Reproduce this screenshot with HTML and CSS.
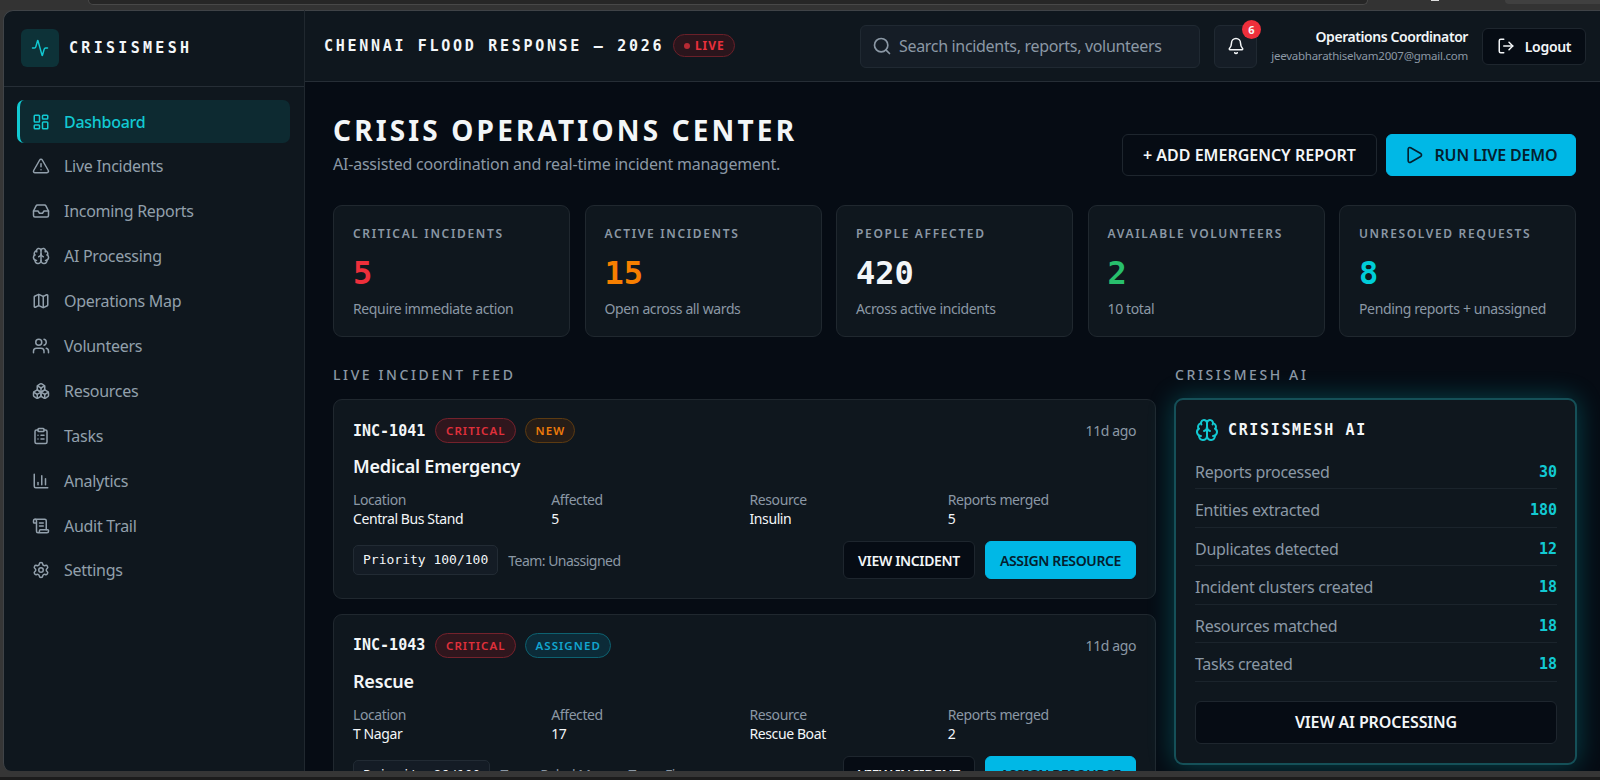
FILE: index.html
```html
<!DOCTYPE html>
<html lang="en">
    <head>
        <meta charset="UTF-8" />
        <title>CrisisMesh - Operations Center</title>
        <link rel="stylesheet" href="styles.css">
    </head>

    <body>
        <!-- browser frame strip above the app -->
        <div class="chrome">
            <div class="address"></div>
            <div class="chrome-mark"></div>
            <div class="chrome-btn"></div>
        </div>

        <div class="app">
            <aside class="sidebar">
                <div class="brand">
                    <div class="logo">
                        <svg class="icon" viewBox="0 0 24 24"><path d="M22 12h-2.48a2 2 0 0 0-1.93 1.46l-2.35 8.36a.25.25 0 0 1-.48 0L9.24 2.18a.25.25 0 0 0-.48 0l-2.35 8.36A2 2 0 0 1 4.49 12H2"/></svg>
                    </div>
                    <span class="brand-name">CRISISMESH</span>
                </div>
                <nav class="nav">
                    <a class="nav-item active">
                        <svg class="icon" viewBox="0 0 24 24"><rect width="7" height="9" x="3" y="3" rx="1"/><rect width="7" height="5" x="14" y="3" rx="1"/><rect width="7" height="9" x="14" y="12" rx="1"/><rect width="7" height="5" x="3" y="16" rx="1"/></svg>
                        <span>Dashboard</span>
                    </a>
                    <a class="nav-item">
                        <svg class="icon" viewBox="0 0 24 24"><path d="m21.73 18-8-14a2 2 0 0 0-3.48 0l-8 14A2 2 0 0 0 4 21h16a2 2 0 0 0 1.73-3"/><path d="M12 9v4"/><path d="M12 17h.01"/></svg>
                        <span>Live Incidents</span>
                    </a>
                    <a class="nav-item">
                        <svg class="icon" viewBox="0 0 24 24"><path d="M22 12h-6l-2 3h-4l-2-3H2"/><path d="M5.45 5.11 2 12v6a2 2 0 0 0 2 2h16a2 2 0 0 0 2-2v-6l-3.45-6.89A2 2 0 0 0 16.76 4H7.24a2 2 0 0 0-1.79 1.11z"/></svg>
                        <span>Incoming Reports</span>
                    </a>
                    <a class="nav-item">
                        <svg class="icon" viewBox="0 0 24 24"><path d="M12 18V5"/><path d="M15 13a4.17 4.17 0 0 1-3-4 4.17 4.17 0 0 1-3 4"/><path d="M17.598 6.5A3 3 0 1 0 12 5a3 3 0 1 0-5.598 1.5"/><path d="M17.997 5.125a4 4 0 0 1 2.526 5.77"/><path d="M18 18a4 4 0 0 0 2-7.464"/><path d="M19.967 17.483A4 4 0 1 1 12 18a4 4 0 1 1-7.967-.517"/><path d="M6 18a4 4 0 0 1-2-7.464"/><path d="M6.003 5.125a4 4 0 0 0-2.526 5.77"/></svg>
                        <span>AI Processing</span>
                    </a>
                    <a class="nav-item">
                        <svg class="icon" viewBox="0 0 24 24"><path d="M14.106 5.553a2 2 0 0 0 1.788 0l3.659-1.83A1 1 0 0 1 21 4.619v12.764a1 1 0 0 1-.553.894l-4.553 2.277a2 2 0 0 1-1.788 0l-4.212-2.106a2 2 0 0 0-1.788 0l-3.659 1.83A1 1 0 0 1 3 19.381V6.618a1 1 0 0 1 .553-.894l4.553-2.277a2 2 0 0 1 1.788 0z"/><path d="M15 5.764v15"/><path d="M9 3.236v15"/></svg>
                        <span>Operations Map</span>
                    </a>
                    <a class="nav-item">
                        <svg class="icon" viewBox="0 0 24 24"><path d="M16 21v-2a4 4 0 0 0-4-4H6a4 4 0 0 0-4 4v2"/><path d="M16 3.128a4 4 0 0 1 0 7.744"/><path d="M22 21v-2a4 4 0 0 0-3-3.87"/><circle cx="9" cy="7" r="4"/></svg>
                        <span>Volunteers</span>
                    </a>
                    <a class="nav-item">
                        <svg class="icon" viewBox="0 0 24 24"><path d="M2.97 12.92A2 2 0 0 0 2 14.63v3.24a2 2 0 0 0 .97 1.71l3 1.8a2 2 0 0 0 2.06 0L12 19v-5.5l-5-3-4.03 2.42Z"/><path d="m7 16.5-4.74-2.85"/><path d="m7 16.5 5-3"/><path d="M7 16.5v5.17"/><path d="M12 13.5V19l3.97 2.38a2 2 0 0 0 2.06 0l3-1.8a2 2 0 0 0 .97-1.71v-3.24a2 2 0 0 0-.97-1.71L17 10.5l-5 3Z"/><path d="m17 16.5-5-3"/><path d="m17 16.5 4.74-2.85"/><path d="M17 16.5v5.17"/><path d="M7.97 4.42A2 2 0 0 0 7 6.13v4.37l5 3 5-3V6.13a2 2 0 0 0-.97-1.71l-3-1.8a2 2 0 0 0-2.06 0l-3 1.8Z"/><path d="M12 8 7.26 5.15"/><path d="m12 8 4.74-2.85"/><path d="M12 13.5V8"/></svg>
                        <span>Resources</span>
                    </a>
                    <a class="nav-item">
                        <svg class="icon" viewBox="0 0 24 24"><rect width="8" height="4" x="8" y="2" rx="1"/><path d="M16 4h2a2 2 0 0 1 2 2v14a2 2 0 0 1-2 2H6a2 2 0 0 1-2-2V6a2 2 0 0 1 2-2h2"/><path d="M12 11h4"/><path d="M12 16h4"/><path d="M8 11h.01"/><path d="M8 16h.01"/></svg>
                        <span>Tasks</span>
                    </a>
                    <a class="nav-item">
                        <svg class="icon" viewBox="0 0 24 24"><path d="M3 3v16a2 2 0 0 0 2 2h16"/><path d="M18 17V9"/><path d="M13 17V5"/><path d="M8 17v-3"/></svg>
                        <span>Analytics</span>
                    </a>
                    <a class="nav-item">
                        <svg class="icon" viewBox="0 0 24 24"><path d="M15 12h-5"/><path d="M15 8h-5"/><path d="M19 17V5a2 2 0 0 0-2-2H4"/><path d="M8 21h12a2 2 0 0 0 2-2v-1a1 1 0 0 0-1-1H11a1 1 0 0 0-1 1v1a2 2 0 1 1-4 0V5a2 2 0 1 0-4 0v2a1 1 0 0 0 1 1h3"/></svg>
                        <span>Audit Trail</span>
                    </a>
                    <a class="nav-item">
                        <svg class="icon" viewBox="0 0 24 24"><path d="M9.671 4.136a2.34 2.34 0 0 1 4.659 0 2.34 2.34 0 0 0 3.319 1.915 2.34 2.34 0 0 1 2.33 4.033 2.34 2.34 0 0 0 0 3.831 2.34 2.34 0 0 1-2.33 4.033 2.34 2.34 0 0 0-3.319 1.915 2.34 2.34 0 0 1-4.659 0 2.34 2.34 0 0 0-3.32-1.915 2.34 2.34 0 0 1-2.33-4.033 2.34 2.34 0 0 0 0-3.831A2.34 2.34 0 0 1 6.35 6.051a2.34 2.34 0 0 0 3.319-1.915"/><circle cx="12" cy="12" r="3"/></svg>
                        <span>Settings</span>
                    </a>
                </nav>
            </aside>

            <div class="main">
                <header class="topbar">
                    <div class="event">
                        <span class="event-name">CHENNAI FLOOD RESPONSE — 2026</span>
                        <span class="live"><i class="dot"></i>LIVE</span>
                    </div>
                    <div class="search">
                        <svg class="icon" viewBox="0 0 24 24"><circle cx="11" cy="11" r="8"/><path d="m21 21-4.34-4.34"/></svg>
                        <span>Search incidents, reports, volunteers</span>
                    </div>
                    <div class="bell">
                        <svg class="icon" viewBox="0 0 24 24"><path d="M10.268 21a2 2 0 0 0 3.464 0"/><path d="M3.262 15.326A1 1 0 0 0 4 17h16a1 1 0 0 0 .74-1.673C19.41 13.956 18 12.499 18 8A6 6 0 0 0 6 8c0 4.499-1.411 5.956-2.738 7.326"/></svg>
                        <span class="count">6</span>
                    </div>
                    <div class="user">
                        <div class="user-name">Operations Coordinator</div>
                        <div class="user-mail">jeevabharathiselvam2007@gmail.com</div>
                    </div>
                    <div class="btn logout">
                        <svg class="icon" viewBox="0 0 24 24"><path d="m16 17 5-5-5-5"/><path d="M21 12H9"/><path d="M9 21H5a2 2 0 0 1-2-2V5a2 2 0 0 1 2-2h4"/></svg>
                        <span>Logout</span>
                    </div>
                </header>

                <div class="content">
                    <div class="page-head">
                        <div>
                            <h1>CRISIS OPERATIONS CENTER</h1>
                            <p class="lead">AI-assisted coordination and real-time incident management.</p>
                        </div>
                        <div class="actions">
                            <div class="btn add">+ ADD EMERGENCY REPORT</div>
                            <div class="btn primary run">
                                <svg class="icon" viewBox="0 0 24 24"><path d="M5 5a2 2 0 0 1 3.008-1.728l11.997 6.998a2 2 0 0 1 .003 3.458l-12 7A2 2 0 0 1 5 19z"/></svg>
                                <span>RUN LIVE DEMO</span>
                            </div>
                        </div>
                    </div>

                    <div class="stats">
                        <div class="card stat">
                            <div class="stat-label">CRITICAL INCIDENTS</div>
                            <div class="stat-value red">5</div>
                            <div class="stat-sub">Require immediate action</div>
                        </div>
                        <div class="card stat">
                            <div class="stat-label">ACTIVE INCIDENTS</div>
                            <div class="stat-value orange">15</div>
                            <div class="stat-sub">Open across all wards</div>
                        </div>
                        <div class="card stat">
                            <div class="stat-label">PEOPLE AFFECTED</div>
                            <div class="stat-value">420</div>
                            <div class="stat-sub">Across active incidents</div>
                        </div>
                        <div class="card stat">
                            <div class="stat-label">AVAILABLE VOLUNTEERS</div>
                            <div class="stat-value green">2</div>
                            <div class="stat-sub">10 total</div>
                        </div>
                        <div class="card stat">
                            <div class="stat-label">UNRESOLVED REQUESTS</div>
                            <div class="stat-value cyan">8</div>
                            <div class="stat-sub">Pending reports + unassigned</div>
                        </div>
                    </div>

                    <div class="columns">
                        <section class="feed">
                            <h2>LIVE INCIDENT FEED</h2>
                            <article class="card incident">
                                <div class="inc-top">
                                    <span class="inc-id">INC-1041</span>
                                    <span class="tag critical">CRITICAL</span>
                                    <span class="tag new">NEW</span>
                                    <span class="ago">11d ago</span>
                                </div>
                                <h3>Medical Emergency</h3>
                                <div class="facts">
                                    <div><label>Location</label><b>Central Bus Stand</b></div>
                                    <div><label>Affected</label><b>5</b></div>
                                    <div><label>Resource</label><b>Insulin</b></div>
                                    <div><label>Reports merged</label><b>5</b></div>
                                </div>
                                <div class="inc-foot">
                                    <span class="priority">Priority 100/100</span>
                                    <span class="team">Team: Unassigned</span>
                                    <div class="btn view">VIEW INCIDENT</div>
                                    <div class="btn primary assign">ASSIGN RESOURCE</div>
                                </div>
                            </article>
                            <article class="card incident">
                                <div class="inc-top">
                                    <span class="inc-id">INC-1043</span>
                                    <span class="tag critical">CRITICAL</span>
                                    <span class="tag assigned">ASSIGNED</span>
                                    <span class="ago">11d ago</span>
                                </div>
                                <h3>Rescue</h3>
                                <div class="facts">
                                    <div><label>Location</label><b>T Nagar</b></div>
                                    <div><label>Affected</label><b>17</b></div>
                                    <div><label>Resource</label><b>Rescue Boat</b></div>
                                    <div><label>Reports merged</label><b>2</b></div>
                                </div>
                                <div class="inc-foot">
                                    <span class="priority">Priority 96/100</span>
                                    <span class="team">Team: Rahul Menon, Team Five</span>
                                    <div class="btn view">VIEW INCIDENT</div>
                                    <div class="btn primary assign">ASSIGN RESOURCE</div>
                                </div>
                            </article>
                        </section>

                        <section class="ai">
                            <h2>CRISISMESH AI</h2>
                            <div class="card ai-card">
                                <div class="ai-head">
                                    <svg class="icon" viewBox="0 0 24 24"><path d="M12 18V5"/><path d="M15 13a4.17 4.17 0 0 1-3-4 4.17 4.17 0 0 1-3 4"/><path d="M17.598 6.5A3 3 0 1 0 12 5a3 3 0 1 0-5.598 1.5"/><path d="M17.997 5.125a4 4 0 0 1 2.526 5.77"/><path d="M18 18a4 4 0 0 0 2-7.464"/><path d="M19.967 17.483A4 4 0 1 1 12 18a4 4 0 1 1-7.967-.517"/><path d="M6 18a4 4 0 0 1-2-7.464"/><path d="M6.003 5.125a4 4 0 0 0-2.526 5.77"/></svg>
                                    <span>CRISISMESH AI</span>
                                </div>
                                <div class="ai-row"><span>Reports processed</span><b>30</b></div>
                                <div class="ai-row"><span>Entities extracted</span><b>180</b></div>
                                <div class="ai-row"><span>Duplicates detected</span><b>12</b></div>
                                <div class="ai-row"><span>Incident clusters created</span><b>18</b></div>
                                <div class="ai-row"><span>Resources matched</span><b>18</b></div>
                                <div class="ai-row"><span>Tasks created</span><b>18</b></div>
                                <div class="btn ai-btn">VIEW AI PROCESSING</div>
                            </div>
                        </section>
                    </div>
                </div>
            </div>
        </div>
    </body>
</html>
```
FILE: styles.css
```css
* {
    box-sizing: border-box;
}
body {
    margin: 0;
    width: 1600px;
    height: 780px;
    overflow: hidden;
    background: #1c1c1c;
    color: #f3f6f8;
    font-family: "Noto Sans", sans-serif;
    font-size: 16px;
}
h1,
h2,
h3,
p {
    margin: 0;
}
.icon {
    flex: none;
    width: 18px;
    height: 18px;
    fill: none;
    stroke: currentColor;
    stroke-width: 2;
    stroke-linecap: round;
    stroke-linejoin: round;
}

/* browser frame */
.chrome {
    display: flex;
    height: 10px;
    padding-left: 88px;
    background: #333;
    overflow: hidden;
}
.address {
    flex: none;
    width: 1280px;
    height: 5px;
    background: #262626;
    border: 1px solid #484848;
    border-top: 0;
    border-radius: 0 0 14px 14px;
}
.chrome-mark {
    flex: none;
    width: 8px;
    height: 1px;
    margin-left: 63px;
    background: #ddd;
}
.chrome-btn {
    flex: none;
    width: 110px;
    height: 4px;
    margin-left: 66px;
    background: #404040;
    border-radius: 0 0 0 8px;
}

/* app shell */
.app {
    display: flex;
    height: 767px;
    padding-left: 3px;
    background: #363636;
    border-bottom: 6px solid #363636;
    overflow: hidden;
}
.sidebar {
    width: 302px;
    flex: none;
    background: #0f171e;
    border: 1px solid #3f4347;
    border-right-color: #20282f;
    border-bottom: 0;
    border-radius: 10px 0 0 8px;
}
.brand {
    display: flex;
    align-items: center;
    gap: 10px;
    height: 76px;
    padding: 0 17px 1px;
    border-bottom: 1px solid #262e36;
}
.logo {
    display: flex;
    align-items: center;
    justify-content: center;
    width: 38px;
    height: 38px;
    border-radius: 6px;
    background: #0d3238;
    color: #12c9d2;
}
.brand-name {
    font: bold 15px "DejaVu Sans Mono", monospace;
    letter-spacing: 3.3px;
}
.nav {
    display: flex;
    flex-direction: column;
    gap: 1.9px;
    padding: 13px 14px 0 13px;
}
.nav-item {
    display: flex;
    align-items: center;
    gap: 14px;
    height: 43px;
    padding-left: 12px;
    border-left: 3px solid transparent;
    border-radius: 7px;
    color: #92a0ac;
    letter-spacing: -0.28px;
}
.nav-item.active {
    background: #0d2a31;
    border-left-color: #12c9d2;
    color: #12c9d2;
    font-weight: 500;
}

.main {
    flex: 1;
    min-width: 0;
    background: #060c14;
    border-top: 1px solid #3f4347;
    overflow: hidden;
}

/* top bar */
.topbar {
    display: flex;
    align-items: center;
    height: 71px;
    padding: 0 14px 0 19px;
    background: #0f171e;
    border-bottom: 1px solid #262e36;
}
.event {
    display: flex;
    align-items: center;
    flex: 1;
    padding-bottom: 1px;
}
.event-name {
    width: 349px;
    font: bold 15px "DejaVu Sans Mono", monospace;
    letter-spacing: 2.7px;
    white-space: nowrap;
}
.live {
    display: flex;
    align-items: center;
    width: 62px;
    height: 23px;
    padding-left: 10px;
    border: 1px solid #6a2029;
    border-radius: 12px;
    background: #2a151c;
    color: #e8303c;
    font-size: 12px;
    font-weight: 700;
    letter-spacing: 0.9px;
}
.dot {
    width: 6px;
    height: 6px;
    margin-right: 5px;
    border-radius: 50%;
    background: #b72a34;
}
.search {
    display: flex;
    align-items: center;
    gap: 7px;
    width: 340px;
    height: 43px;
    padding-left: 11px;
    border: 1px solid #202932;
    border-radius: 6px;
    background: #151d26;
    color: #8b98a5;
    letter-spacing: -0.32px;
    white-space: nowrap;
}
.search .icon {
    width: 20px;
    height: 20px;
}
.bell {
    position: relative;
    display: flex;
    align-items: center;
    justify-content: center;
    width: 43px;
    height: 43px;
    margin-left: 14px;
    border: 1px solid #202932;
    border-radius: 6px;
    background: #151d26;
}
.count {
    position: absolute;
    top: -6px;
    right: -5px;
    width: 19px;
    height: 19px;
    border-radius: 50%;
    background: #ee2f3b;
    font-size: 11px;
    font-weight: 700;
    line-height: 19px;
    text-align: center;
}
.user {
    width: 211px;
    padding-bottom: 1px;
    text-align: right;
    white-space: nowrap;
}
.user-name {
    font-size: 14px;
    font-weight: 600;
    line-height: 19px;
    letter-spacing: -0.43px;
}
.user-mail {
    color: #8b98a5;
    font-size: 11.5px;
    line-height: 19px;
    letter-spacing: -0.25px;
}
.btn {
    display: flex;
    align-items: center;
    justify-content: center;
    border: 1px solid #1e262e;
    border-radius: 6px;
    background: #060c14;
    font-weight: 600;
    white-space: nowrap;
}
.btn.primary {
    background: #00b8e6;
    border-color: #00b8e6;
    color: #04202e;
}
.logout {
    gap: 10px;
    width: 104px;
    height: 37px;
    margin-left: 14px;
    font-size: 14px;
    letter-spacing: -0.3px;
}

/* page */
.content {
    padding: 28px 24px 0 28px;
}
.page-head {
    display: flex;
    justify-content: space-between;
    height: 95px;
}
h1 {
    margin-top: 1px;
    font-size: 28px;
    font-weight: 700;
    line-height: 38px;
    letter-spacing: 3.15px;
}
.lead {
    margin-top: 2px;
    color: #8b98a5;
    line-height: 26px;
    letter-spacing: -0.22px;
}
.actions {
    display: flex;
    gap: 9px;
    padding-top: 24px;
}
.add {
    width: 255px;
    height: 42px;
    letter-spacing: 0;
}
.run {
    gap: 10px;
    width: 190px;
    height: 42px;
    letter-spacing: -0.15px;
}
.run .icon {
    width: 20px;
    height: 20px;
}
.card {
    background: #0f171e;
    border: 1px solid #20282f;
    border-radius: 9px;
}
.stats {
    display: grid;
    grid-template-columns: repeat(5, 1fr);
    gap: 14.5px;
}
.stat {
    height: 132px;
    padding: 19px 19px 0;
    white-space: nowrap;
}
.stat-label {
    color: #8b98a5;
    font-size: 12px;
    font-weight: 600;
    line-height: 18px;
    letter-spacing: 1.65px;
}
.stat-value {
    margin-top: 10px;
    font: bold 32px/40px "DejaVu Sans Mono", monospace;
}
.stat-sub {
    margin-top: 6px;
    color: #8b98a5;
    font-size: 14px;
    line-height: 20px;
    letter-spacing: -0.37px;
}
.red { color: #ee2f3b; }
.orange { color: #f77f00; }
.green { color: #28bf6c; }
.cyan { color: #00cdd8; }

.columns {
    display: grid;
    grid-template-columns: 823px 403px;
    gap: 18px;
    margin-top: 28px;
}
h2 {
    height: 34px;
    color: #8b98a5;
    font-size: 14px;
    font-weight: 500;
    line-height: 20px;
    letter-spacing: 2.6px;
}

/* incident feed */
.incident {
    height: 200px;
    margin-bottom: 14.5px;
    padding: 18px 19px 0;
}
.inc-top {
    display: flex;
    align-items: center;
    gap: 9px;
    height: 25px;
}
.inc-id {
    width: 73px;
    font: bold 15px "DejaVu Sans Mono", monospace;
}
.tag {
    height: 25px;
    padding: 0 9px 0 10px;
    border: 1px solid;
    border-radius: 13px;
    font-size: 11.5px;
    font-weight: 600;
    line-height: 24px;
    letter-spacing: 1.05px;
}
.critical {
    background: #2f161d;
    border-color: #74222c;
    color: #e0303b;
}
.new {
    background: #261d17;
    border-color: #5c3b12;
    color: #ef7b0a;
}
.assigned {
    background: #0c2b38;
    border-color: #0d6170;
    color: #12a5cf;
}
.ago {
    margin-left: auto;
    color: #8b98a5;
    font-size: 14px;
    letter-spacing: -0.4px;
}
h3 {
    margin-top: 10px;
    font-size: 18px;
    font-weight: 600;
    line-height: 26px;
    letter-spacing: -0.2px;
}
.facts {
    display: grid;
    grid-template-columns: repeat(4, 1fr);
    gap: 10px;
    margin-top: 11px;
    font-size: 14px;
    line-height: 19px;
    letter-spacing: -0.4px;
}
.facts label {
    display: block;
    color: #8b98a5;
}
.facts b {
    display: block;
    font-weight: 400;
}
.inc-foot {
    display: flex;
    align-items: center;
    gap: 10px;
    height: 38px;
    margin-top: 13px;
    font-size: 14px;
}
.priority {
    height: 30px;
    padding: 0 9px;
    border: 1px solid #222b34;
    border-radius: 5px;
    background: #141c25;
    font: 13px/27px "DejaVu Sans Mono", monospace;
}
.team {
    margin-right: auto;
    color: #8b98a5;
    letter-spacing: -0.52px;
}
.view {
    width: 132px;
    height: 38px;
    letter-spacing: -0.35px;
}
.assign {
    width: 151px;
    height: 38px;
    letter-spacing: -0.37px;
}

/* ai summary */
.ai h2 {
    height: 33px;
    padding-left: 1px;
}
.ai-card {
    height: 367px;
    padding: 16px 18px 0 19px;
    border: 2px solid #155058;
    box-shadow: 0 0 26px rgba(0, 200, 210, 0.3);
}
.ai-head {
    display: flex;
    align-items: center;
    gap: 9px;
    height: 27px;
    margin-bottom: 7.5px;
    color: #f3f6f8;
    font: bold 15px "DejaVu Sans Mono", monospace;
    letter-spacing: 1.65px;
}
.ai-head .icon {
    width: 24px;
    height: 24px;
    color: #12c9d2;
}
.ai-row {
    display: flex;
    align-items: center;
    justify-content: space-between;
    height: 38.5px;
    padding-top: 5px;
    border-bottom: 1px solid #1b242c;
    color: #8b98a5;
    letter-spacing: -0.28px;
}
.ai-row b {
    color: #12c9d2;
    font: bold 15px "DejaVu Sans Mono", monospace;
    letter-spacing: 0;
}
.ai-btn {
    height: 43px;
    margin-top: 19px;
    letter-spacing: -0.15px;
}
```
